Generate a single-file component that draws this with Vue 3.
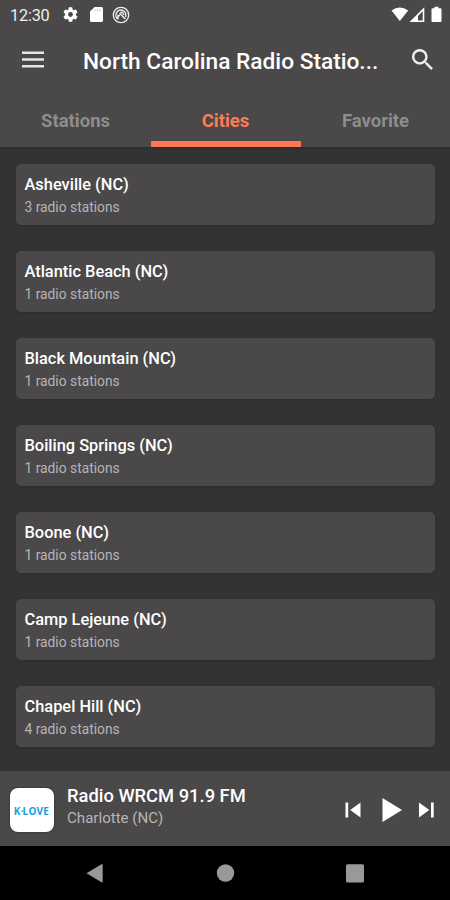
<script setup>
const tabs = ['Stations', 'Cities', 'Favorite']
const activeTab = 'Cities'
const cities = [
  { name: 'Asheville (NC)', count: 3 },
  { name: 'Atlantic Beach (NC)', count: 1 },
  { name: 'Black Mountain (NC)', count: 1 },
  { name: 'Boiling Springs (NC)', count: 1 },
  { name: 'Boone (NC)', count: 1 },
  { name: 'Camp Lejeune (NC)', count: 1 },
  { name: 'Chapel Hill (NC)', count: 4 },
]
</script>

<template>
  <div class="screen">
    <header class="header">
      <div class="status">
        <span class="clock">12:30</span>
        <svg class="gear" viewBox="2 2 20 20"><path fill="#fff" d="M19.14 12.94c.04-.3.06-.61.06-.94 0-.32-.02-.64-.07-.94l2.03-1.58a.49.49 0 0 0 .12-.61l-1.92-3.32a.49.49 0 0 0-.59-.22l-2.39.96c-.5-.38-1.03-.7-1.62-.94l-.36-2.54a.48.48 0 0 0-.48-.41h-3.84c-.24 0-.43.17-.47.41l-.36 2.54c-.59.24-1.13.57-1.62.94l-2.39-.96a.48.48 0 0 0-.59.22L2.74 8.87c-.12.21-.08.47.12.61l2.03 1.58c-.05.3-.09.63-.09.94s.02.64.07.94l-2.03 1.58a.49.49 0 0 0-.12.61l1.92 3.32c.12.22.37.29.59.22l2.39-.96c.5.38 1.03.7 1.62.94l.36 2.54c.05.24.24.41.48.41h3.84c.24 0 .44-.17.47-.41l.36-2.54c.59-.24 1.13-.56 1.62-.94l2.39.96c.22.08.47 0 .59-.22l1.92-3.32a.48.48 0 0 0-.12-.61zM12 15.2a3.2 3.2 0 1 1 0-6.4 3.2 3.2 0 0 1 0 6.4z" /></svg>
        <svg class="sd" viewBox="0 0 13 15"><path fill="#fff" d="M4.6 0H11.5Q13 0 13 1.5V13.5Q13 15 11.5 15H1.5Q0 15 0 13.500V4.600Z" /><path stroke="#c8c7c8" stroke-width="1" d="M5 2v2.500M7.500 2v2.500M10 2v2.500" /></svg>
        <svg class="badge" viewBox="0 0 18 18" fill="none" stroke="#eee"><circle cx="9" cy="9" r="7.700" stroke-width="1.300" /><path stroke-width="1.500" d="M6 13.200A5 5 0 1 1 13.500 11M6 13.200V9.500H8M7.500 7L13.300 13M8.500 6.200Q11.500 6 11.700 9" /></svg>
        <span class="spacer"></span>
        <svg class="signals" viewBox="0 0 53 18"><path fill="#fff" d="M0.500 4.500Q8.800-1.500 17.200 4.500L8.800 15Z" /><path fill="#fff" fill-rule="evenodd" d="M18.500 16L33.300 1.300V16ZM27 14.500H31.700V5.200L27 9.900Z" /><path fill="#fff" d="M43.500 .8h4v1.500h2q1 0 1 1V15q0 1-1 1h-8q-1 0-1-1V3.300q0-1 1-1h2Z" /></svg>
      </div>
      <div class="toolbar">
        <svg class="menu" viewBox="0 0 22 17"><path stroke="#e6e6e6" stroke-width="2.500" d="M0 1.700H22M0 8.500H22M0 15.300H22" /></svg>
        <h1 class="title">North Carolina Radio Statio...</h1>
        <svg class="search" viewBox="3 3 17.500 17.500"><path fill="#eee" d="M15.500 14h-.79l-.28-.27A6.500 6.500 0 1 0 13.730 14.430l.27.28v.79l5 4.990L20.490 19zM9.500 14a4.500 4.500 0 1 1 0-9 4.500 4.500 0 0 1 0 9z" /></svg>
      </div>
      <nav class="tabs">
        <div v-for="tab in tabs" :key="tab" class="tab" :class="{ active: tab === activeTab }"><span>{{ tab }}</span></div>
      </nav>
    </header>
    <main class="list">
      <article v-for="city in cities" :key="city.name" class="card">
        <div class="name">{{ city.name }}</div>
        <div class="count">{{ city.count }} radio stations</div>
      </article>
    </main>
    <section class="player">
      <div class="logo"><span>K<i>·</i>LOVE</span></div>
      <div class="track">
        <div class="station">Radio WRCM 91.9 FM</div>
        <div class="place">Charlotte (NC)</div>
      </div>
      <svg class="controls" viewBox="0 0 90 26" fill="#fff"><path d="M.5 5.500h2.700v15H.5ZM15.500 5.500v15L5.200 13ZM37.500 1L57 13L37.500 25ZM74 5.500L84.300 13L74 20.500ZM86 5.500h2.700v15H86Z" /></svg>
    </section>
    <footer class="system">
      <svg viewBox="0 0 450 54" fill="#999"><path d="M86.500 27.200L101.500 18.200Q102.700 17.500 102.700 19V35.500Q102.700 37 101.500 36.300Z" /><circle cx="225.500" cy="27" r="8.700" /><rect x="346" y="18.300" width="18" height="18.300" rx="1.500" /></svg>
    </footer>
  </div>
</template>

<style>
body { margin: 0; background: #333; }
</style>

<style scoped>
.screen { width: 450px; height: 900px; display: flex; flex-direction: column; overflow: hidden; background: #333; color: #fff; font-family: Roboto, sans-serif; }
.header { height: 147px; background: #4a4849; box-shadow: 0 1px 2px #292929; flex: none; display: flex; flex-direction: column; }
.status { height: 29px; display: flex; align-items: center; padding: 0 7px 0 10px; box-sizing: border-box; }
.clock { width: 53px; font-size: 16.300px; letter-spacing: -.2px; color: #eee; padding-top: 2px; }
.gear { width: 15px; height: 15px; }
.sd { width: 13px; height: 15px; margin-left: 12px; }
.badge { width: 18px; height: 18px; margin-left: 9px; }
.spacer { flex: 1; }
.signals { width: 53px; height: 18px; margin: 1px -1px 0 0; }
.toolbar { height: 60px; display: flex; align-items: center; padding: 0 17px 0 21.500px; }
.menu { width: 22px; height: 17px; }
.title { margin: 6px 0 0 39.500px; font-size: 22.700px; line-height: 28px; font-weight: 500; white-space: nowrap; width: 329px; }
.search { width: 21px; height: 21px; flex: none; }
.tabs { height: 58px; display: grid; grid-template-columns: repeat(3, 150px); padding-left: .5px; }
.tab { display: flex; justify-content: center; align-items: center; color: #8e8d8e; font-size: 18.500px; font-weight: 700; }
.tab span { padding-top: 5px; line-height: 22px; height: 22px; }
.tab.active { color: #ff7b54; box-shadow: inset 0 -6px #ff7750; }
.list { height: 624px; box-sizing: border-box; padding: 17px 15px 0 15.500px; display: flex; flex-direction: column; gap: 26px; }
.card { height: 61px; flex: none; box-sizing: border-box; padding: 11px 9px 0; border-radius: 5px; background: #4a4849; box-shadow: 0 1px 2px #2d2d2d; white-space: nowrap; }
.name { font-size: 16.400px; line-height: 20px; font-weight: 500; }
.count { margin-top: 3px; font-size: 13.800px; line-height: 18px; color: #b6b5b6; }
.player { height: 75px; flex: none; display: flex; align-items: center; background: #4a4849; }
.logo { width: 44px; height: 44px; margin: 2px 0 0 9.500px; border-radius: 8px; background: #fff; display: flex; align-items: center; justify-content: center; box-shadow: 0 0 2px #222; }
.logo span { color: #219edb; font-size: 10px; font-weight: 700; letter-spacing: .25px; font-family: "Open Sans", sans-serif; padding-top: 2px; }
.logo i { font-style: normal; letter-spacing: -1px; }
.track { width: 278px; margin: -5px 0 0 13.500px; white-space: nowrap; }
.station { font-size: 18.350px; line-height: 23px; font-weight: 500; }
.place { font-size: 15.100px; line-height: 20px; color: #b6b5b6; margin-top: 1px; }
.controls { width: 90px; height: 26px; margin-top: 3px; }
.system { height: 54px; background: #000; flex: none; }
.system svg { display: block; width: 450px; height: 54px; }
</style>
